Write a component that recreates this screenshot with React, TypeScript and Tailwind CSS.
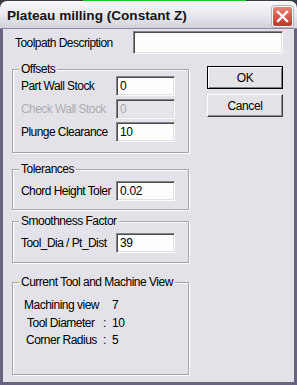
import React from "react";

const font = { fontFamily: '"Liberation Sans", Arial, sans-serif' };

function Field({ value, disabled = false, className = "" }: { value: string; disabled?: boolean; className?: string }) {
  return (
    <div
      className={`h-[20px] w-[59px] border border-t-[#858585] border-l-[#858585] border-r-[#fbfbfb] border-b-[#fbfbfb] shadow-[inset_1px_1px_0_#4a4a4a,inset_-1px_-1px_0_#e0dfe4] pl-[3px] pt-[1px] text-[12px] leading-[16px] tracking-[-0.3px] ${
        disabled ? "bg-[#e6e5ea] text-[#a8a8ac]" : "bg-[#fdfdfd] text-black"
      } ${className}`}
    >
      {value}
    </div>
  );
}

function Group({ title, className = "", children }: { title: string; className?: string; children: React.ReactNode }) {
  return (
    <div
      className={`relative border border-[#a4a3aa] shadow-[inset_1px_1px_0_#fff,1px_1px_0_#fff] ${className}`}
    >
      <span className="absolute -top-[9px] left-[6px] bg-[#e3e2e8] px-[2px] text-[12px] leading-[16px] tracking-[-0.5px] text-black">
        {title}
      </span>
      {children}
    </div>
  );
}

function Row({ label, value, disabled = false }: { label: string; value: string; disabled?: boolean }) {
  return (
    <div className="flex items-center">
      <span
        className={`w-[103px] pl-[8px] text-[12px] leading-[16px] tracking-[-0.55px] whitespace-nowrap ${
          disabled ? "text-[#aeadb3]" : "text-black"
        }`}
      >
        {label}
      </span>
      <Field value={value} disabled={disabled} />
    </div>
  );
}

export default function App() {
  return (
    <div className="w-[297px] h-[385px] bg-[#3c3c44] flex flex-col" style={font}>
      {/* top 1px line */}
      <div className="h-[1px] flex">
        <div className="w-[83px]" />
        <div className="w-[163px] bg-[#1ec81e]" />
      </div>
      {/* title bar */}
      <div className="h-[28px] rounded-t-[7px] bg-gradient-to-b from-[#fafafc] via-[#e9e9ee] to-[#d3d2dc] flex items-center justify-between pl-[7px] pr-[4px] border-b border-[#8d8ba3]">
        <span className="text-[13.6px] font-bold text-[#141414] leading-none pt-[3px]">
          Plateau milling (Constant Z)
        </span>
        <div className="w-[21px] h-[21px] mt-[4px] rounded-[3px] border border-white bg-gradient-to-b from-[#e8877b] via-[#d7584a] to-[#b83a2c] flex items-center justify-center shadow-[0_0_0_1px_#b9b3c0]">
          <svg width="13" height="13" viewBox="0 0 13 13">
            <path d="M2 2 L11 11 M11 2 L2 11" stroke="#fff" strokeWidth="2.4" strokeLinecap="square" />
          </svg>
        </div>
      </div>
      {/* body */}
      <div className="flex-1 bg-[#e3e2e8] border-l-[3px] border-r-[3px] border-b-[3px] border-[#66647f] flex flex-col">
        <div className="flex items-center pt-[2px]">
          <span className="w-[130px] pl-[12px] text-[12px] leading-[16px] tracking-[-0.55px] text-black">
            Toolpath Description
          </span>
          <div className="h-[23px] w-[150px] border border-t-[#858585] border-l-[#858585] border-r-[#fbfbfb] border-b-[#fbfbfb] shadow-[inset_1px_1px_0_#4a4a4a,inset_-1px_-1px_0_#e0dfe4] bg-[#fdfdfd]" />
        </div>
        <div className="flex mt-[12px] pl-[9px]">
          <div className="w-[177px] mt-[3px] flex flex-col">
            <Group title="Offsets" className="h-[84px] pt-[6px] flex flex-col gap-[3px]">
              <Row label="Part Wall Stock" value="0" />
              <Row label="Check Wall Stock" value="0" disabled />
              <Row label="Plunge Clearance" value="10" />
            </Group>
            <Group title="Tolerances" className="h-[41px] mt-[16px] pt-[11px]">
              <Row label="Chord Height Toler" value="0.02" />
            </Group>
            <Group title="Smoothness Factor" className="h-[42px] mt-[11px] pt-[11px]">
              <Row label="Tool_Dia / Pt_Dist" value="39" />
            </Group>
            <Group title="Current Tool and Machine View" className="h-[93px] mt-[19px] pt-[14px]">
              <div className="flex text-[12px] leading-[17.5px] tracking-[-0.5px] text-black">
                <span className="w-[90px] pl-[11px]">Machining view</span>
                <span className="w-[9px]" />
                <span>7</span>
              </div>
              <div className="flex text-[12px] leading-[17.5px] tracking-[-0.5px] text-black">
                <span className="w-[90px] pl-[14px]">Tool Diameter</span>
                <span className="w-[9px]">:</span>
                <span>10</span>
              </div>
              <div className="flex text-[12px] leading-[17.5px] tracking-[-0.5px] text-black">
                <span className="w-[90px] pl-[13px]">Corner Radius</span>
                <span className="w-[9px]">:</span>
                <span>5</span>
              </div>
            </Group>
          </div>
          <div className="ml-[18px] w-[76px] flex flex-col gap-[5px]">
            <div className="h-[23px] border border-black bg-[#e4e3e8] shadow-[inset_1px_1px_0_#fff,inset_-1px_-1px_0_#7e7d85] flex items-center justify-center text-[12px] tracking-[-0.4px] text-black">
              OK
            </div>
            <div className="h-[23px] border border-t-white border-l-white border-r-[#3f3f45] border-b-[#3f3f45] bg-[#e4e3e8] shadow-[inset_-1px_-1px_0_#8e8d95] flex items-center justify-center text-[12px] tracking-[-0.4px] text-black">
              Cancel
            </div>
          </div>
        </div>
      </div>
    </div>
  );
}
